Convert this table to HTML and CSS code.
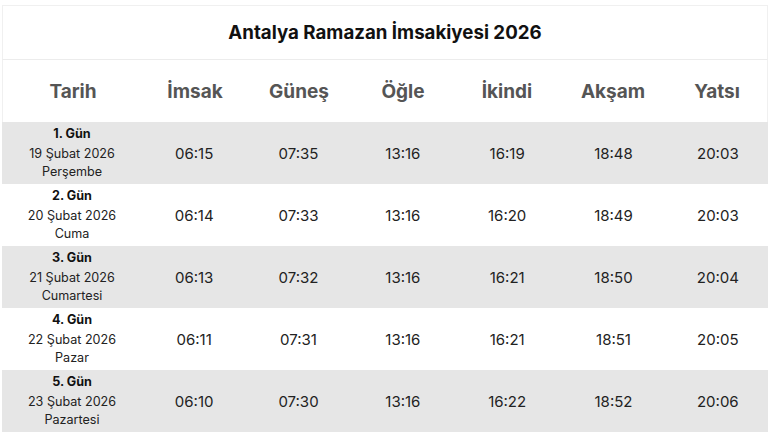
FILE: index.html
```html
<!DOCTYPE html>
<html lang="tr">
<head>
<meta charset="utf-8">
<link rel="stylesheet" href="styles.css">
</head>
<body>
<div class="wrap">
  <div class="title">Antalya Ramazan İmsakiyesi 2026</div>
  <div class="table">
    <div class="row head">
      <div class="cell">Tarih</div><div class="cell">İmsak</div><div class="cell">Güneş</div><div class="cell">Öğle</div><div class="cell">İkindi</div><div class="cell">Akşam</div><div class="cell">Yatsı</div>
    </div>
    <div class="row odd">
      <div class="cell date"><b>1. Gün</b><span>19 Şubat 2026</span><span>Perşembe</span></div>
      <div class="cell">06:15</div><div class="cell">07:35</div><div class="cell">13:16</div><div class="cell">16:19</div><div class="cell">18:48</div><div class="cell">20:03</div>
    </div>
    <div class="row">
      <div class="cell date"><b>2. Gün</b><span>20 Şubat 2026</span><span>Cuma</span></div>
      <div class="cell">06:14</div><div class="cell">07:33</div><div class="cell">13:16</div><div class="cell">16:20</div><div class="cell">18:49</div><div class="cell">20:03</div>
    </div>
    <div class="row odd">
      <div class="cell date"><b>3. Gün</b><span>21 Şubat 2026</span><span>Cumartesi</span></div>
      <div class="cell">06:13</div><div class="cell">07:32</div><div class="cell">13:16</div><div class="cell">16:21</div><div class="cell">18:50</div><div class="cell">20:04</div>
    </div>
    <div class="row">
      <div class="cell date"><b>4. Gün</b><span>22 Şubat 2026</span><span>Pazar</span></div>
      <div class="cell">06:11</div><div class="cell">07:31</div><div class="cell">13:16</div><div class="cell">16:21</div><div class="cell">18:51</div><div class="cell">20:05</div>
    </div>
    <div class="row odd">
      <div class="cell date"><b>5. Gün</b><span>23 Şubat 2026</span><span>Pazartesi</span></div>
      <div class="cell">06:10</div><div class="cell">07:30</div><div class="cell">13:16</div><div class="cell">16:22</div><div class="cell">18:52</div><div class="cell">20:06</div>
    </div>
  </div>
</div>
</body>
</html>
```
FILE: styles.css
```css
html, body {
  margin: 0;
  padding: 0;
  background: #fff;
  font-family: Inter, "Noto Sans", sans-serif;
  overflow: hidden;
}
.wrap {
  padding: 5px 2px 0 2px;
}
.title {
  height: 53px;
  border: 1px solid #f0f0f0;
  border-bottom: 1px solid #ececec;
  display: flex;
  align-items: center;
  justify-content: center;
  font-size: 18.7px;
  font-weight: 700;
  color: #111;
}
.table {
  display: flex;
  flex-direction: column;
}
.row {
  display: grid;
  grid-template-columns: 140px repeat(6, 1fr);
  height: 62px;
  align-items: center;
  font-size: 15px;
  color: #222;
}
.row .cell {
  text-align: center;
}
.row .cell:nth-child(6),
.row .cell:nth-child(7) {
  padding-left: 4px;
}
.row.head {
  height: 62px;
  border-left: 1px solid #f0f0f0;
  border-right: 1px solid #f0f0f0;
  font-size: 19px;
  font-weight: 700;
  color: #555;
}
.row.odd {
  background: #e6e6e6;
}
.cell.date {
  display: flex;
  flex-direction: column;
  align-items: center;
  font-size: 12.6px;
  line-height: 18px;
  color: #222;
}
.cell.date b {
  color: #111;
  margin-bottom: 2px;
}
```
